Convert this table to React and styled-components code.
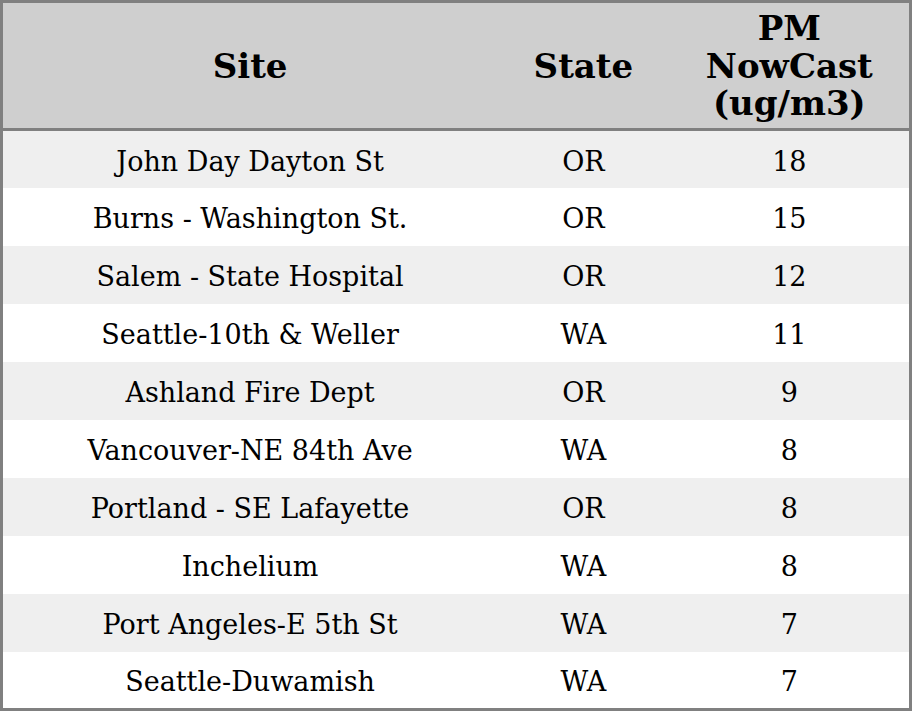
import React from "react";
import styled, { createGlobalStyle } from "styled-components";

const Global = createGlobalStyle`
  html, body { margin: 0; padding: 0; background: #ffffff; }
  body { font-family: "DejaVu Serif", serif; }
`;

const Table = styled.table`
  width: 912px;
  height: 711px;
  border-collapse: collapse;
  table-layout: fixed;
  border: 3px solid #808080;
  font-family: "DejaVu Serif", serif;
  color: #000;
`;

const Col = styled.col`
  width: ${(p) => p.$w}px;
`;

const HeadRow = styled.tr`
  background: #cfcfcf;
  height: 128px;
  border-bottom: 3px solid #808080;
`;

const Th = styled.th`
  font-size: 34px;
  font-weight: bold;
  line-height: 37.5px;
  text-align: center;
  padding: 2px 0 0;
`;

const Row = styled.tr`
  background: ${(p) => (p.$alt ? "#efefef" : "#ffffff")};
  height: 57.7px;
`;

const Td = styled.td`
  font-size: 27px;
  line-height: 31px;
  text-align: center;
  padding: 4px 0 0;
`;

const data = [
  ["John Day Dayton St", "OR", "18"],
  ["Burns - Washington St.", "OR", "15"],
  ["Salem - State Hospital", "OR", "12"],
  ["Seattle-10th & Weller", "WA", "11"],
  ["Ashland Fire Dept", "OR", "9"],
  ["Vancouver-NE 84th Ave", "WA", "8"],
  ["Portland - SE Lafayette", "OR", "8"],
  ["Inchelium", "WA", "8"],
  ["Port Angeles-E 5th St", "WA", "7"],
  ["Seattle-Duwamish", "WA", "7"],
];

export default function App() {
  return (
    <>
      <Global />
      <Table>
        <colgroup>
          <Col $w={494} />
          <Col $w={172} />
          <Col $w={240} />
        </colgroup>
        <thead>
          <HeadRow>
            <Th>Site</Th>
            <Th>State</Th>
            <Th>
              PM
              <br />
              NowCast
              <br />
              (ug/m3)
            </Th>
          </HeadRow>
        </thead>
        <tbody>
          {data.map((r, i) => (
            <Row key={i} $alt={i % 2 === 0}>
              <Td>{r[0]}</Td>
              <Td>{r[1]}</Td>
              <Td>{r[2]}</Td>
            </Row>
          ))}
        </tbody>
      </Table>
    </>
  );
}
